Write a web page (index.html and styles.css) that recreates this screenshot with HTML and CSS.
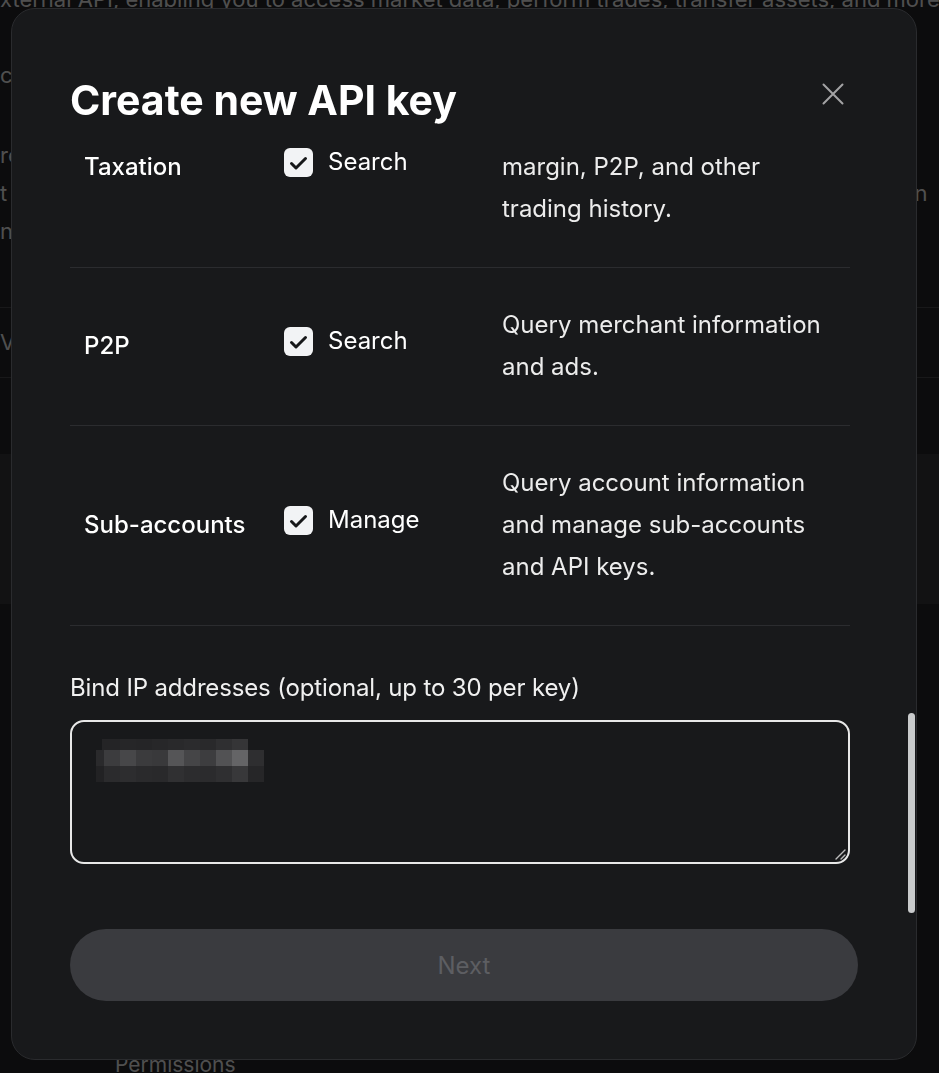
FILE: index.html
```html
<!DOCTYPE html>
<html lang="en">
<head>
<meta charset="utf-8">
<title>Create new API key</title>
<link rel="stylesheet" href="styles.css">
</head>
<body>
<div class="page">
  <p class="bg-line bg-top">xternal API, enabling you to access market data, perform trades, transfer assets, and more.</p>
  <p class="bg-line bg-p1">can create up to 50 API keys per account. Use API keys to connect external tools and k</p>
  <p class="bg-line bg-p2">read-only permissions are enabled by default for each new key you create.<br>t is recommended that you bind IP addresses to your API keys to keep your assets safe in<br>ng sessions across devices.</p>
  <div class="bg-table"><div class="bg-row">V/IP level</div></div>
  <div class="bg-band"></div>
  <p class="bg-line bg-perm">Permissions</p>
</div>

<div class="overlay">
  <div class="modal" role="dialog" aria-labelledby="modal-title">
    <header class="modal-head">
      <h2 class="modal-title" id="modal-title">Create new API key</h2>
      <button class="close" type="button" aria-label="Close">
        <svg width="24" height="24" viewBox="0 0 24 24"><path d="M2.5 2.5 L21.5 21.5 M21.5 2.5 L2.5 21.5" stroke="currentColor" stroke-width="2" stroke-linecap="round" fill="none"/></svg>
      </button>
    </header>

    <div class="modal-body">
      <div class="perm-list">
        <div class="perm-row">
          <div class="perm-name">Taxation</div>
          <label class="perm-opt"><span class="check"><svg width="29" height="29" viewBox="0 0 29 29"><path d="M7.5 15.5 L12 20 L21.5 10.5" stroke="#17181a" stroke-width="3" stroke-linecap="round" stroke-linejoin="round" fill="none"/></svg></span><span>Search</span></label>
          <p class="perm-desc is-cut">margin, P2P, and other trading history.</p>
        </div>
        <div class="perm-row">
          <div class="perm-name">P2P</div>
          <label class="perm-opt"><span class="check"><svg width="29" height="29" viewBox="0 0 29 29"><path d="M7.5 15.5 L12 20 L21.5 10.5" stroke="#17181a" stroke-width="3" stroke-linecap="round" stroke-linejoin="round" fill="none"/></svg></span><span>Search</span></label>
          <p class="perm-desc">Query merchant information and ads.</p>
        </div>
        <div class="perm-row">
          <div class="perm-name">Sub-accounts</div>
          <label class="perm-opt"><span class="check"><svg width="29" height="29" viewBox="0 0 29 29"><path d="M7.5 15.5 L12 20 L21.5 10.5" stroke="#17181a" stroke-width="3" stroke-linecap="round" stroke-linejoin="round" fill="none"/></svg></span><span>Manage</span></label>
          <p class="perm-desc">Query account information and manage sub-accounts and API keys.</p>
        </div>
      </div>

      <div class="ip-block">
        <label class="ip-label">Bind IP addresses (optional, up to 30 per key)</label>
        <div class="ip-field">
          <div class="redact">
            <div class="redact-row r1"></div>
            <div class="redact-row r2"></div>
            <div class="redact-row r3"></div>
          </div>
          <svg class="resize" width="12" height="12" viewBox="0 0 12 12"><path d="M11 2 L2 11 M11 7 L7 11" stroke="#bdbdbd" stroke-width="1.4" stroke-linecap="round"/></svg>
        </div>
      </div>
    </div>

    <footer class="modal-foot">
      <button class="next" type="button" disabled>Next</button>
    </footer>

    <div class="scroll-thumb"></div>
  </div>
</div>
</body>
</html>
```

FILE: styles.css
```css
html, body {
  margin: 0;
  height: 100%;
}

body {
  background: #1d1d1f;
  font-family: Inter, "Noto Sans", "Liberation Sans", sans-serif;
  overflow: hidden;
}

/* ---------- background page (dimmed by the overlay) ---------- */
.page {
  height: 100%;
  overflow: hidden;
  color: #bdbdbd;
  font-size: 22px;
  line-height: 38px;
  white-space: nowrap;
}

.bg-line {
  margin: 0;
}

.bg-top {
  margin-top: -20px;
}

.bg-p1 {
  margin-top: 38px;
}

.bg-p2 {
  margin-top: 42px;
}

.bg-table {
  margin-top: 57px;
  border-top: 1px solid #3a3a3c;
  border-bottom: 1px solid #3a3a3c;
}

.bg-row {
  height: 69px;
  line-height: 69px;
}

.bg-band {
  margin-top: 76px;
  height: 150px;
  background: #2c2c2e;
}

.bg-perm {
  margin-top: 442px;
  padding-left: 115px;
  font-size: 21px;
}

/* ---------- overlay & modal ---------- */
.overlay {
  position: fixed;
  inset: 0;
  background: rgba(0, 0, 0, 0.58);
  display: flex;
  padding: 8px 22px 13px 11px;
}

.modal {
  position: relative;
  flex: 1;
  display: flex;
  flex-direction: column;
  background: #18191b;
  border: 1px solid #2a2b2e;
  border-radius: 24px;
  overflow: hidden;
  color: #fff;
}

.modal-head {
  display: flex;
  justify-content: space-between;
  align-items: flex-start;
  padding: 67px 58px 21px 58px;
}

.modal-title {
  margin: 0;
  font-size: 41px;
  line-height: 48px;
  font-weight: 700;
  letter-spacing: 0;
  color: #fff;
}

.close {
  margin: 6px 13px 0 0;
  padding: 0;
  width: 24px;
  height: 24px;
  border: 0;
  background: none;
  color: #a3a3a5;
  cursor: pointer;
}

.close svg {
  display: block;
}

.modal-body {
  flex: 1;
  overflow: hidden;
  padding: 0 66px 0 58px;
}

.perm-list {
  margin-top: -77px;
}

.perm-row {
  display: grid;
  grid-template-columns: 200px 218px 1fr;
  align-items: center;
  padding: 36px 20px 37px 14px;
  border-bottom: 1px solid #2b2c2f;
}

.perm-name {
  font-size: 24px;
  line-height: 32px;
  font-weight: 500;
}

.perm-opt {
  display: flex;
  align-items: center;
  gap: 15px;
  padding-bottom: 10px;
  font-size: 24px;
  line-height: 32px;
}

.check {
  display: block;
  width: 29px;
  height: 29px;
  border-radius: 6px;
  background: #f2f3f5;
}

.check svg {
  display: block;
}

.perm-desc {
  margin: 0;
  font-size: 24px;
  line-height: 42px;
  color: #ececec;
}

.perm-desc.is-cut {
  padding-top: 42px;
}

.ip-block {
  padding-top: 46px;
}

.ip-label {
  display: block;
  margin-bottom: 16px;
  font-size: 24px;
  line-height: 32px;
  letter-spacing: -0.15px;
  color: #f0f0f0;
}

.ip-field {
  position: relative;
  height: 144px;
  box-sizing: border-box;
  border: 2px solid #e8e8e8;
  border-radius: 14px;
  padding: 17px 24px;
}

.redact {
  width: 168px;
}

.redact-row.r1 {
  height: 11px;
  background: linear-gradient(90deg,
    transparent 0 6px,
    #242426 6px 24px, #262628 24px 40px, #252527 40px 56px, #272729 56px 72px,
    #29292b 72px 88px, #2b2b2d 88px 104px, #29292b 104px 120px, #2f2f31 120px 136px,
    #353537 136px 152px, transparent 152px);
}

.redact-row.r2 {
  height: 16px;
  background: linear-gradient(90deg,
    #2a2a2c 0 8px,
    #3c3c3e 8px 24px, #474749 24px 40px, #3b3b3d 40px 56px, #39393b 56px 72px,
    #555557 72px 88px, #454547 88px 104px, #3d3d3f 104px 120px, #525254 120px 136px,
    #646466 136px 152px, #2e2e30 152px 168px);
}

.redact-row.r3 {
  height: 16px;
  background: linear-gradient(90deg,
    #222224 0 8px,
    #2b2b2d 8px 24px, #2d2d2f 24px 40px, #2a2a2c 40px 56px, #29292b 56px 72px,
    #303032 72px 88px, #2c2c2e 88px 104px, #2b2b2d 104px 120px, #2f2f31 120px 136px,
    #38383a 136px 152px, #262628 152px 168px);
}

.resize {
  position: absolute;
  right: 2px;
  bottom: 2px;
}

.modal-foot {
  padding: 14px 58px 58px 58px;
}

.next {
  display: block;
  width: 100%;
  height: 72px;
  border: 0;
  border-radius: 36px;
  background: #3a3b3f;
  color: #5d5e62;
  font-family: inherit;
  font-size: 24px;
}

.scroll-thumb {
  position: absolute;
  right: 1px;
  top: 704px;
  width: 7px;
  height: 200px;
  border-radius: 4px;
  background: #c9cbcc;
}
```
